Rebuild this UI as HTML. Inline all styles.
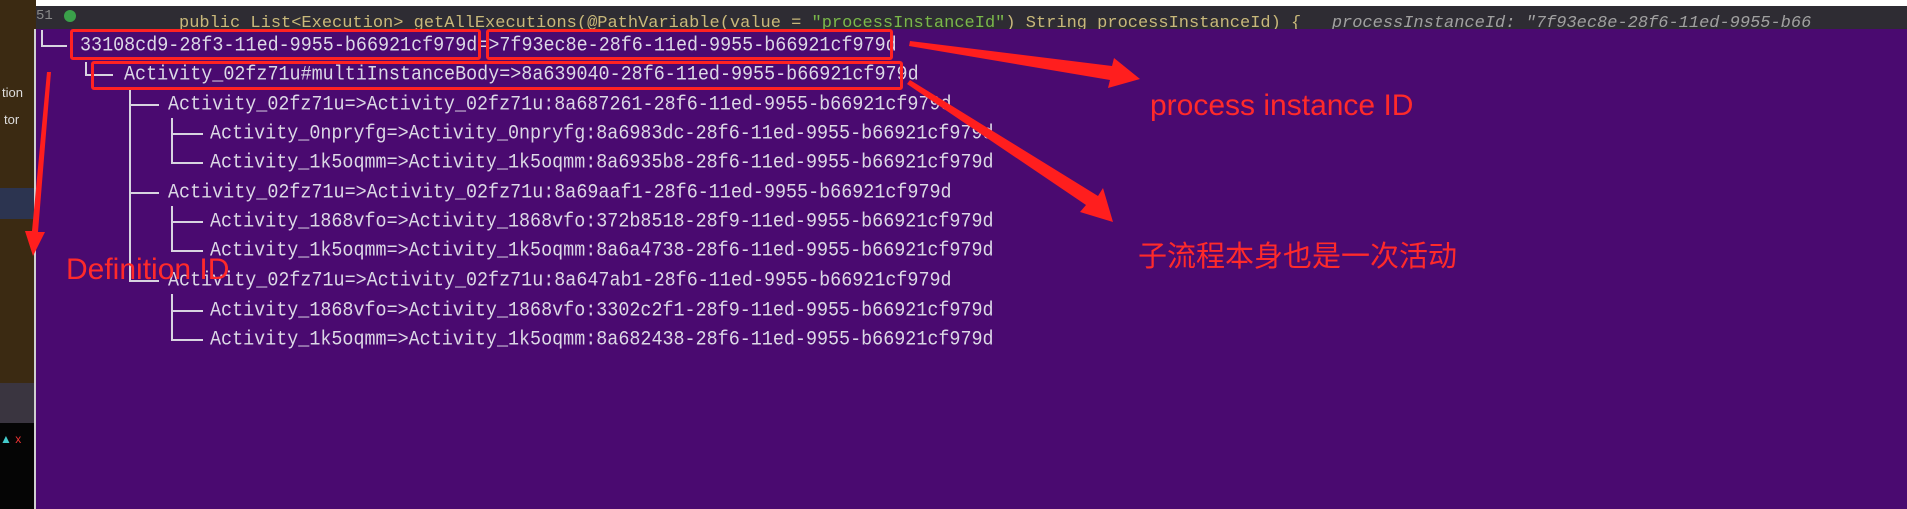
<!DOCTYPE html>
<html><head><meta charset="utf-8"><style>
html,body{margin:0;padding:0}
body{width:1907px;height:509px;position:relative;overflow:hidden;background:#4a0a70;font-family:"Liberation Mono",monospace}
.t{position:absolute;color:#dcd8e6;font-size:18.4px;line-height:20px;white-space:pre;transform:scaleY(1.1)}
.v{position:absolute;background:#d8d4e0;width:2px}
.h{position:absolute;background:#d8d4e0;height:2px}
.box{position:absolute;border:3px solid #ff2222;border-radius:3px}
.lbl{position:absolute;color:#ff2a2a;font-family:"Liberation Sans","Noto Sans CJK SC",sans-serif;white-space:nowrap}
</style></head><body>
<div style="position:absolute;left:0;top:0;width:1907px;height:6px;background:#fff"></div>
<div style="position:absolute;left:36px;top:6px;width:1871px;height:23px;background:#2e2c33;overflow:hidden">
<div style="position:absolute;left:0;top:2px;color:#8a8a8a;font-size:14px">51</div>
<div style="position:absolute;left:28px;top:4px;width:12px;height:12px;border-radius:50%;background:#3aa04a"></div>
<div style="position:absolute;left:143px;top:8px;color:#c8b87a;font-size:17px;white-space:pre">public List&lt;Execution&gt; getAllExecutions(@PathVariable(value = <span style="color:#7ab84a">"processInstanceId"</span>) String processInstanceId) {   <i style="color:#a0a0a0">processInstanceId: "7f93ec8e-28f6-11ed-9955-b66</i></div>
</div>
<div style="position:absolute;left:0;top:0;width:36px;height:383px;background:#3b2a12"></div>
<div style="position:absolute;left:0;top:188px;width:36px;height:31px;background:#2c3450"></div>
<div style="position:absolute;left:0;top:383px;width:36px;height:40px;background:#3a3540"></div>
<div style="position:absolute;left:0;top:423px;width:36px;height:86px;background:#050505"></div>
<div style="position:absolute;left:34px;top:29px;width:2px;height:480px;background:#cfcfcf"></div>
<div style="position:absolute;left:2px;top:85px;color:#ddd;font:13px 'Liberation Sans',sans-serif">tion</div>
<div style="position:absolute;left:4px;top:112px;color:#ddd;font:13px 'Liberation Sans',sans-serif">tor</div>
<div style="position:absolute;left:0;top:432px;color:#4cc;font:12px 'Liberation Sans',sans-serif">▲ <span style="color:#e33">x</span></div>

<div class="v" style="left:41px;top:30px;height:16px"></div><div class="h" style="left:41px;top:45px;width:26px"></div>
<div class="v" style="left:85px;top:62px;height:13px"></div><div class="h" style="left:85px;top:74px;width:28px"></div>
<div class="v" style="left:129px;top:88px;height:193px"></div>
<div class="h" style="left:129px;top:104px;width:30px"></div>
<div class="h" style="left:129px;top:192px;width:30px"></div>
<div class="h" style="left:129px;top:280px;width:30px"></div>
<div class="v" style="left:171px;top:118px;height:45px"></div>
<div class="h" style="left:171px;top:133px;width:32px"></div>
<div class="h" style="left:171px;top:162px;width:32px"></div>
<div class="v" style="left:171px;top:206px;height:45px"></div>
<div class="h" style="left:171px;top:221px;width:32px"></div>
<div class="h" style="left:171px;top:250px;width:32px"></div>
<div class="v" style="left:171px;top:294px;height:46px"></div>
<div class="h" style="left:171px;top:310px;width:32px"></div>
<div class="h" style="left:171px;top:339px;width:32px"></div>

<div class="t" style="left:80px;top:36px">33108cd9-28f3-11ed-9955-b66921cf979d=&gt;7f93ec8e-28f6-11ed-9955-b66921cf979d</div>
<div class="t" style="left:124px;top:65px">Activity_02fz71u#multiInstanceBody=&gt;8a639040-28f6-11ed-9955-b66921cf979d</div>
<div class="t" style="left:168px;top:95px">Activity_02fz71u=&gt;Activity_02fz71u:8a687261-28f6-11ed-9955-b66921cf979d</div>
<div class="t" style="left:210px;top:124px">Activity_0npryfg=&gt;Activity_0npryfg:8a6983dc-28f6-11ed-9955-b66921cf979d</div>
<div class="t" style="left:210px;top:153px">Activity_1k5oqmm=&gt;Activity_1k5oqmm:8a6935b8-28f6-11ed-9955-b66921cf979d</div>
<div class="t" style="left:168px;top:183px">Activity_02fz71u=&gt;Activity_02fz71u:8a69aaf1-28f6-11ed-9955-b66921cf979d</div>
<div class="t" style="left:210px;top:212px">Activity_1868vfo=&gt;Activity_1868vfo:372b8518-28f9-11ed-9955-b66921cf979d</div>
<div class="t" style="left:210px;top:241px">Activity_1k5oqmm=&gt;Activity_1k5oqmm:8a6a4738-28f6-11ed-9955-b66921cf979d</div>
<div class="t" style="left:168px;top:271px">Activity_02fz71u=&gt;Activity_02fz71u:8a647ab1-28f6-11ed-9955-b66921cf979d</div>
<div class="t" style="left:210px;top:301px">Activity_1868vfo=&gt;Activity_1868vfo:3302c2f1-28f9-11ed-9955-b66921cf979d</div>
<div class="t" style="left:210px;top:330px">Activity_1k5oqmm=&gt;Activity_1k5oqmm:8a682438-28f6-11ed-9955-b66921cf979d</div>

<div class="box" style="left:70px;top:29px;width:405px;height:25px"></div>
<div class="box" style="left:486px;top:29px;width:401px;height:25px"></div>
<div class="box" style="left:91px;top:61px;width:806px;height:23px"></div>

<svg style="position:absolute;left:0;top:0" width="1907" height="509">
<g fill="#ff1e1e">
<polygon points="910,41 1112,66 1114,58 1140,79 1108,88 1110,80 909,46"/>
<polygon points="910,80 1098,196 1103,188 1113,222 1080,212 1086,205 907,84"/>
<polygon points="47,72 51,72 38,232 45,232 33,256 25,231 32,231"/>
</g></svg>

<div class="lbl" style="left:1150px;top:89px;font-size:30px">process instance ID</div>
<div class="lbl" style="left:1138px;top:233px;font-size:29px">子流程本身也是一次活动</div>
<div class="lbl" style="left:66px;top:253px;font-size:30px">Definition ID</div>
</body></html>
